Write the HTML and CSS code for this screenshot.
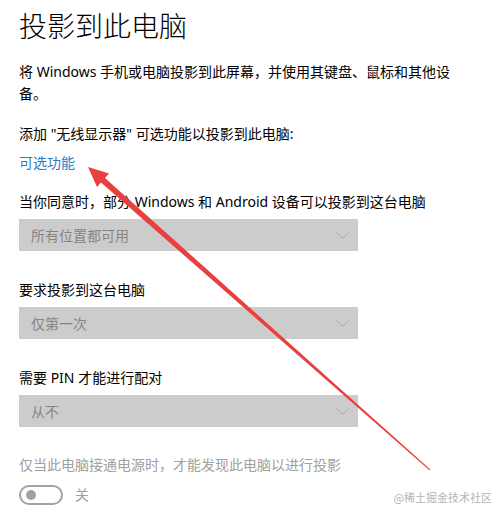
FILE: index.html
```html
<!DOCTYPE html>
<html lang="zh-CN">
<head>
<meta charset="utf-8">
<link rel="stylesheet" href="styles.css">
</head>
<body>
<main class="page">
  <h1 class="title">投影到此电脑</h1>
  <p class="text intro">将 Windows 手机或电脑投影到此屏幕，并使用其键盘、鼠标和其他设<br>备。</p>
  <p class="text add">添加 "无线显示器" 可选功能以投影到此电脑:</p>
  <a class="text link">可选功能</a>

  <p class="text label first">当你同意时，部分 Windows 和 Android 设备可以投影到这台电脑</p>
  <div class="select"><span>所有位置都可用</span><svg class="chev" width="13" height="8" viewBox="0 0 13 8"><polyline points="0.5,0.5 6.5,6.5 12.5,0.5" fill="none" stroke="#a6a6a6" stroke-width="1"/></svg></div>

  <p class="text label">要求投影到这台电脑</p>
  <div class="select"><span>仅第一次</span><svg class="chev" width="13" height="8" viewBox="0 0 13 8"><polyline points="0.5,0.5 6.5,6.5 12.5,0.5" fill="none" stroke="#a6a6a6" stroke-width="1"/></svg></div>

  <p class="text label">需要 PIN 才能进行配对</p>
  <div class="select"><span>从不</span><svg class="chev" width="13" height="8" viewBox="0 0 13 8"><polyline points="0.5,0.5 6.5,6.5 12.5,0.5" fill="none" stroke="#a6a6a6" stroke-width="1"/></svg></div>

  <p class="text label disabled">仅当此电脑接通电源时，才能发现此电脑以进行投影</p>
  <div class="toggle-row">
    <span class="toggle"><span class="knob"></span></span>
    <span class="toggle-text">关</span>
  </div>
</main>
<div class="watermark">@稀土掘金技术社区</div>
<svg class="arrow" width="497" height="507" viewBox="0 0 497 507">
  <polygon points="88,167 97,187 101,182.5 429.7,470.4 430.3,469.6 105,178.1 109,173.6" fill="#e8403f"/>
</svg>
</body>
</html>
```

FILE: styles.css
```css
html, body {
  margin: 0;
  padding: 0;
  background: #ffffff;
}
body {
  width: 497px;
  height: 507px;
  position: relative;
  overflow: hidden;
  font-family: "Noto Sans", "Noto Sans CJK SC", sans-serif;
  color: #000000;
}
.page {
  padding: 5px 0 0 19px;
  display: flex;
  flex-direction: column;
  align-items: flex-start;
}
.title {
  margin: 0;
  font-size: 28px;
  line-height: 40px;
  font-weight: 300;
  font-family: "Noto Sans CJK SC", sans-serif;
}
.text {
  margin: 0;
  font-size: 14px;
  line-height: 22px;
}
.intro {
  margin-top: 16px;
}
.add {
  margin-top: 18px;
}
.link {
  margin-top: 7px;
  color: #2b7cc0;
}
.label {
  margin-top: 28px;
}
.label.first {
  margin-top: 17px;
}
.select {
  margin-top: 6px;
  width: 339px;
  height: 32px;
  box-sizing: border-box;
  background: #cccccc;
  display: flex;
  align-items: center;
  justify-content: space-between;
  padding: 0 9px 0 12px;
  font-size: 14px;
  color: #858585;
}
.chev {
  display: block;
  margin-top: 1px;
}
.disabled {
  color: #a0a0a0;
  margin-top: 27px;
}
.toggle-row {
  margin-top: 9px;
  display: flex;
  align-items: center;
  gap: 12px;
}
.toggle {
  width: 44px;
  height: 20px;
  box-sizing: border-box;
  border: 2px solid #a2a2a2;
  border-radius: 10px;
  display: flex;
  align-items: center;
  padding-left: 5px;
}
.knob {
  width: 10px;
  height: 10px;
  border-radius: 50%;
  background: #a2a2a2;
}
.toggle-text {
  font-size: 14px;
  color: #a0a0a0;
  line-height: 20px;
}
.watermark {
  position: absolute;
  right: 5px;
  bottom: 3px;
  font-size: 11px;
  line-height: 14px;
  color: #b5b5b5;
  font-family: "Noto Sans CJK SC", serif;
}
.arrow {
  position: absolute;
  left: 0;
  top: 0;
  pointer-events: none;
}
```
